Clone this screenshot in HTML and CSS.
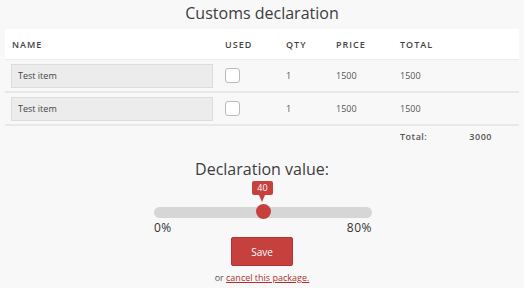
FILE: index.html
```html
<!DOCTYPE html>
<html lang="en">
<head>
  <meta charset="UTF-8">
  <title>Customs declaration</title>
  <link rel="stylesheet" href="styles.css">
</head>
<body>
  <h1 class="title">Customs declaration</h1>

  <div class="items">
    <div class="row head">
      <div>NAME</div>
      <div>USED</div>
      <div>QTY</div>
      <div>PRICE</div>
      <div>TOTAL</div>
    </div>
    <div class="row">
      <div><input class="name" type="text" value="Test item"></div>
      <div><span class="check"></span></div>
      <div>1</div>
      <div>1500</div>
      <div>1500</div>
    </div>
    <div class="row">
      <div><input class="name" type="text" value="Test item"></div>
      <div><span class="check"></span></div>
      <div>1</div>
      <div>1500</div>
      <div>1500</div>
    </div>
    <div class="sum">
      <span class="sum-label">Total:</span>
      <span class="sum-value">3000</span>
    </div>
  </div>

  <div class="declare">
    <h2>Declaration value:</h2>
    <div class="slider">
      <div class="track">
        <div class="handle">
          <span class="tip">40</span>
        </div>
      </div>
      <div class="ends">
        <span>0%</span>
        <span>80%</span>
      </div>
    </div>
    <button class="save">Save</button>
    <p class="cancel">or <a href="#">cancel this package.</a></p>
  </div>
</body>
</html>
```

FILE: styles.css
```css
body {
  margin: 0;
  background-color: #f8f8f8;
  font-family: "Open Sans", sans-serif;
  color: #444;
}
.title {
  margin: 0;
  font-size: 16px;
  font-weight: 400;
  text-align: center;
  line-height: 26px;
  color: #3d3d3d;
}
.items {
  margin: 3px 5px 0 5px;
}
.row {
  display: grid;
  grid-template-columns: 213px 61px 50px 64px 1fr;
  align-items: center;
  height: 31px;
  border-bottom: 2px solid #e8e8e8;
  font-size: 9px;
  color: #555;
}
.row > div {
  padding-left: 7px;
}
.row.head {
  height: 30px;
  background: white;
  font-weight: 600;
  letter-spacing: 1px;
  color: #444;
  border-bottom: 1px solid #ececec;
}
.name {
  box-sizing: border-box;
  width: 202px;
  height: 24px;
  margin-left: -1px;
  padding: 0 6px;
  border: 1px solid #dcdcdc;
  background: #ececec;
  font-family: "Open Sans", sans-serif;
  font-size: 9px;
  color: #444;
}
.check {
  display: block;
  width: 13px;
  height: 13px;
  border: 1px solid #bbb;
  border-radius: 3px;
  background: white;
}
.sum {
  display: flex;
  height: 20px;
  align-items: center;
  padding-left: 395px;
  font-size: 9px;
  font-weight: 600;
  letter-spacing: 0.5px;
  color: #555;
}
.sum-value {
  margin-left: 42px;
}
.declare {
  display: flex;
  flex-direction: column;
  align-items: center;
  margin-top: 10px;
}
.declare h2 {
  margin: 0;
  font-size: 16px;
  font-weight: 400;
  line-height: 26px;
  color: #3d3d3d;
}
.slider {
  width: 218px;
  margin-top: 25px;
  margin-left: 2px;
}
.track {
  position: relative;
  height: 11px;
  border-radius: 6px;
  background: #d6d6d6;
}
.handle {
  position: absolute;
  left: 102px;
  top: -3px;
  width: 15px;
  height: 15px;
  border-radius: 50%;
  background: #c6403e;
}
.tip {
  position: absolute;
  left: -4px;
  bottom: 24px;
  width: 21px;
  height: 14px;
  line-height: 14px;
  border-radius: 2px;
  background: #c6403e;
  color: white;
  font-size: 9px;
  text-align: center;
}
.tip::after {
  content: "";
  position: absolute;
  left: 7px;
  bottom: -7px;
  border-left: 3px solid transparent;
  border-right: 3px solid transparent;
  border-top: 7px solid #c6403e;
}
.ends {
  display: flex;
  justify-content: space-between;
  margin-top: 3px;
  font-size: 12px;
  line-height: 14px;
  letter-spacing: 0.5px;
  color: #333;
}
.save {
  width: 62px;
  height: 29px;
  margin-top: 2px;
  border: 1px solid #b33432;
  border-radius: 2px;
  background: #c6403e;
  color: white;
  font-family: "Open Sans", sans-serif;
  font-size: 10px;
}
.cancel {
  margin: 5px 0 0 0;
  font-size: 9px;
  color: #555;
}
.cancel a {
  color: #b32f2d;
}
```
